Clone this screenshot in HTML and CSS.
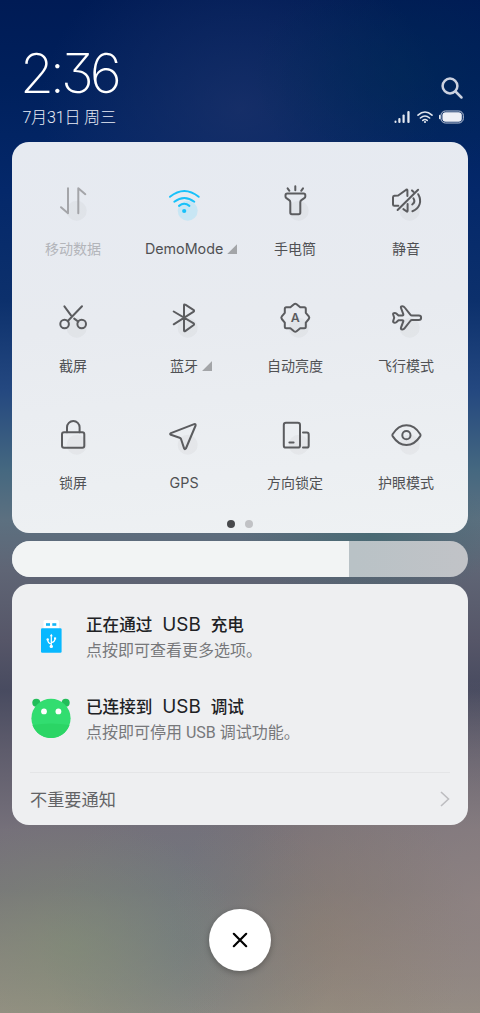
FILE: index.html
```html
<!DOCTYPE html>
<html lang="zh-CN">
<head>
<meta charset="utf-8">
<title>控制中心</title>
<link rel="stylesheet" href="styles.css">
</head>
<body>
<main class="shade">
  <header class="head">
    <div class="when">
      <div class="clock">2:36</div>
      <div class="date">7月31日 周三</div>
    </div>
    <div class="status">
      <svg class="search" width="24" height="24" viewBox="0 0 24 24"><circle cx="10" cy="10" r="7.4"/><path d="M15.5 15.5L21.5 21.5"/></svg>
      <div class="indicators">
        <svg width="17" height="14" viewBox="0 0 17 14" fill="#e4e8f0"><rect x="0.5" y="10.5" width="2" height="2.5" rx="1"/><rect x="4.3" y="8" width="2.2" height="5" rx="1"/><rect x="8.5" y="4.5" width="2.2" height="8.5" rx="1"/><rect x="13.3" y="1" width="2.3" height="12" rx="1"/></svg>
        <svg class="mini-wifi" width="18" height="14" viewBox="0 0 18 14"><path d="M2 5.2Q9 -1.2 16 5.2M4.4 8Q9 4 13.6 8M6.8 10.4Q9 8.7 11.2 10.4"/><circle cx="9" cy="12" r="1.1"/></svg>
        <svg width="26" height="14" viewBox="0 0 26 14"><rect x="1.9" y="1" width="22.4" height="12" rx="4.5" fill="none" stroke="#bdc7da"/><rect x="3.4" y="2.3" width="19.4" height="9.4" rx="3.2" fill="#eef0f6"/><rect x="0" y="4.8" width="1.6" height="4.4" rx=".8" fill="#e4e8f0"/></svg>
      </div>
    </div>
  </header>

  <section class="panel toggles">
    <div class="grid">
      <div class="tile off"><svg class="icon" viewBox="0 0 40 40"><circle class="spot" cx="23.7" cy="29.7" r="10"/><path d="M15 7.2V32.2L8 26.2M25.3 32.2V7.2L32.3 13.2"/></svg><span class="label">移动数据</span></div>
      <div class="tile on"><svg class="icon" viewBox="0 0 40 40"><circle class="spot" cx="23.7" cy="29.7" r="10"/><path d="M6 15.8Q20.3 4.2 34.7 15.8M10.3 20.7Q20.3 13.2 30.3 20.7M15 24.9Q20.2 20.7 25.4 24.9"/><circle class="dot" cx="20.2" cy="30" r="2.1"/></svg><span class="label latin">DemoMode<i class="corner"></i></span></div>
      <div class="tile"><svg class="icon" viewBox="0 0 40 40"><circle class="spot" cx="23.7" cy="29.7" r="10"/><path d="M12.6 7.4L14.4 9.8M20.3 5.3V9.2M28 7.4L26.2 9.8M12.2 12.6H28.6Q30.3 12.6 30.3 14.2V15.5Q30.3 16.6 29.3 17.2L26.4 19.1Q25.3 19.9 25.3 21.2V31.6Q25.3 33.3 23.6 33.3H17Q15.3 33.3 15.3 31.6V21.2Q15.3 19.9 14.2 19.1L11.4 17.2Q10.5 16.6 10.5 15.5V14.2Q10.5 12.6 12.2 12.6Z"/></svg><span class="label">手电筒</span></div>
      <div class="tile"><svg class="icon" viewBox="0 0 40 40"><circle class="spot" cx="23.7" cy="29.7" r="10"/><path d="M12.3 24.7H8.3Q7 24.7 7 23.4V16.2Q7 14.9 8.3 14.8L12.2 14.5L20.2 8.7Q21.4 8 21.4 9.5V15M11.6 29L32.1 8.8M21.6 23V29.8Q21.6 31.2 20.4 30.3L17.4 28.1M26 9.4L27.4 10.7M32.2 13.2C36.2 20 33.8 27.5 26.4 30.2M27.4 17.3C29 19.8 28.4 22 26.2 23.5"/></svg><span class="label">静音</span></div>

      <div class="tile"><svg class="icon" viewBox="0 0 40 40"><circle class="spot" cx="23.7" cy="29.7" r="10"/><circle cx="11.6" cy="26" r="4.3"/><circle cx="28.7" cy="26" r="4.3"/><path d="M29 8.3L14.6 23.2M11.4 8.3L18 17.3M21.2 20.6L25.4 23.7"/></svg><span class="label">截屏</span></div>
      <div class="tile"><svg class="icon" viewBox="0 0 40 40"><circle class="spot" cx="23.7" cy="29.7" r="10"/><path d="M9.7 13.5L29.3 25.2Q30.8 26.2 29.4 27.3L21.2 33.1Q20 33.8 20 32.2V7.5Q20 5.8 21.3 6.7L29.4 11.9Q30.8 12.9 29.3 13.9L9.7 26.3"/></svg><span class="label">蓝牙<i class="corner"></i></span></div>
      <div class="tile"><svg class="icon" viewBox="0 0 40 40"><circle class="spot" cx="23.7" cy="29.7" r="10"/><path d="M19 6.2Q20.3 5.2 21.6 6.2L25.2 9.2H29.3Q30.8 9.2 30.8 10.7V14.8L33.8 18.4Q34.8 19.7 33.8 21L30.8 24.6V28.7Q30.8 30.2 29.3 30.2H25.2L21.6 33.2Q20.3 34.2 19 33.2L15.4 30.2H11.3Q9.8 30.2 9.8 28.7V24.6L6.8 21Q5.8 19.7 6.8 18.4L9.8 14.8V10.7Q9.8 9.2 11.3 9.2H15.4Z"/><text class="auto" x="20.3" y="24.4" text-anchor="middle">A</text></svg><span class="label">自动亮度</span></div>
      <div class="tile"><svg class="icon" viewBox="0 0 40 40"><circle class="spot" cx="23.7" cy="29.7" r="10"/><path d="M32.8 17.5H26Q25 17.5 24.3 16.6L18.7 9.5Q17.8 8.2 16.3 8.2Q14.4 8.3 15 10L17.3 16.2Q17.6 17.4 16.4 17.4H12.5L10.3 15.4Q9.7 14.9 8.7 14.9Q7 14.9 7.1 16.3L8.2 19.8L7.1 23.3Q7 24.7 8.7 24.7Q9.7 24.7 10.3 24.2L12.5 22.2H16.4Q17.6 22.2 17.3 23.4L15 29.6Q14.4 31.3 16.3 31.4Q17.8 31.4 18.7 30.1L24.3 23Q25 22.1 26 22.1H32.8A2.3 2.3 0 0 0 32.8 17.5Z"/></svg><span class="label">飞行模式</span></div>

      <div class="tile"><svg class="icon" viewBox="0 0 40 40"><circle class="spot" cx="23.7" cy="29.7" r="10"/><rect x="9" y="17.2" width="22.3" height="15.5" rx="2"/><path d="M14 17.2V12.3A6.3 6.3 0 0 1 26.6 12.3V17.2"/></svg><span class="label">锁屏</span></div>
      <div class="tile"><svg class="icon" viewBox="0 0 40 40"><circle class="spot" cx="23.7" cy="29.7" r="10"/><path d="M30.2 9.1L6.9 18.1Q5.4 18.9 6.9 19.8L15.6 22.7Q16.7 23.1 17.1 24.2L20.1 33.4Q20.8 35 21.9 33.5L31.6 10.5Q31.9 8.6 30.2 9.1Z"/></svg><span class="label latin">GPS</span></div>
      <div class="tile"><svg class="icon" viewBox="0 0 40 40"><circle class="spot" cx="23.7" cy="29.7" r="10"/><rect x="8.8" y="7.8" width="16.2" height="24.8" rx="2.2"/><path d="M14.4 27.4H18.6M28 17.6H31.8Q33.7 17.6 33.7 19.5V30.7Q33.7 32.6 31.8 32.6H28"/></svg><span class="label">方向锁定</span></div>
      <div class="tile"><svg class="icon" viewBox="0 0 40 40"><circle class="spot" cx="23.7" cy="29.7" r="10"/><path d="M6.6 19.2C14.3 7.4 26.6 7.4 34.3 19.2Q34.8 20.2 34.3 21.1C26.6 33 14.3 33 6.6 21.1Q6.1 20.2 6.6 19.2Z"/><circle cx="20.4" cy="20.2" r="4.1"/></svg><span class="label">护眼模式</span></div>
    </div>
    <div class="pager"><i class="page current"></i><i class="page"></i></div>
  </section>

  <div class="brightness"><div class="level"></div></div>

  <section class="panel notices">
    <article class="notice">
      <svg class="badge" width="40" height="40" viewBox="0 0 40 40"><rect x="12.5" y="4" width="15.5" height="10" rx="1.5" fill="#fff"/><rect x="15" y="7.2" width="4" height="2.6" fill="#16b5f5"/><rect x="21.3" y="7.2" width="4" height="2.6" fill="#16b5f5"/><rect x="10" y="12.2" width="20.6" height="24.6" rx="1.2" fill="#08b8ff"/><g fill="none" stroke="#fff" stroke-width="1.2"><path d="M20.3 19V30M20.3 28Q16.7 27.4 16.7 23.6M20.3 26.6Q24 26 24 22.5"/></g><g fill="#fff"><circle cx="20.3" cy="30.4" r="1.7"/><circle cx="16.7" cy="23.5" r="1.2"/><rect x="23" y="21.4" width="2.1" height="2.1"/><path d="M18.8 20.2L20.3 17.8L21.8 20.2Z"/></g></svg>
      <div class="copy"><h2 class="title">正在通过 <b class="usb">USB</b> 充电</h2><p class="detail">点按即可查看更多选项。</p></div>
    </article>
    <article class="notice">
      <svg class="badge" width="40" height="40" viewBox="0 0 40 40"><circle cx="5.3" cy="4.8" r="4" fill="#22bd59"/><circle cx="34.7" cy="4.8" r="4" fill="#22bd59"/><circle cx="20" cy="20.3" r="19.6" fill="#32dd70"/><path d="M1.5 27Q20 23.8 38.5 27A19.6 19.6 0 0 1 1.5 27Z" fill="#2bd565"/><circle cx="13" cy="13.4" r="2.9" fill="#fff"/><circle cx="27.4" cy="13.4" r="2.9" fill="#fff"/></svg>
      <div class="copy"><h2 class="title">已连接到 <b class="usb">USB</b> 调试</h2><p class="detail">点按即可停用 USB 调试功能。</p></div>
    </article>
    <footer class="more"><span>不重要通知</span><svg width="10" height="16" viewBox="0 0 10 16"><path d="M1 1L8.5 8L1 15" fill="none" stroke="#bdbdc0" stroke-width="1.6"/></svg></footer>
  </section>

  <button class="close" aria-label="关闭"><svg width="16" height="16" viewBox="0 0 16 16"><path d="M1.8 1.8L14.2 14.2M14.2 1.8L1.8 14.2"/></svg></button>
</main>
</body>
</html>
```
FILE: styles.css
```css
* { box-sizing: border-box; }

body {
  margin: 0;
  font-family: Roboto, "Noto Sans CJK SC", sans-serif;
}

.shade {
  height: 1013px;
  padding: 0 12.4px;
  overflow: hidden;
  display: flex;
  flex-direction: column;
  background:
    radial-gradient(ellipse 170px 130px at 70px 945px, rgba(128, 144, 116, .55), transparent),
    radial-gradient(ellipse 150px 170px at 320px 930px, rgba(142, 126, 110, .5), transparent),
    radial-gradient(ellipse 150px 150px at 190px 940px, rgba(108, 120, 128, .7), transparent),
    radial-gradient(ellipse 240px 220px at 480px 900px, rgba(148, 134, 132, .75), transparent),
    radial-gradient(ellipse 130px 70px at 370px 535px, rgba(65, 105, 112, .7), transparent),
    radial-gradient(ellipse 150px 110px at 400px 75px, rgba(0, 44, 84, .5), transparent),
    radial-gradient(ellipse 200px 170px at 240px 110px, rgba(28, 50, 106, .75), transparent),
    linear-gradient(#001b55 0, #00205c 80px, #04286a 190px, #0c306c 300px, #244880 390px, #456880 470px, #5c7080 520px, #5f6575 570px, #565668 640px, #484b60 690px, #5e5c6c 750px, #75707a 830px, #77747a 890px, #8a8480 960px, #969084 1013px);
}

.head {
  height: 142px;
  padding: 0 3px 0 10px;
  display: flex;
  justify-content: space-between;
  color: #fff;
}

.when { padding-top: 44px; }

.clock {
  height: 62px;
  margin-left: -2.5px;
  font: 200 55px/58px Inter, Lato, sans-serif;
  font-feature-settings: "cv09" 1;
  letter-spacing: -4px;
}

.date {
  font-size: 16.1px;
  line-height: 24px;
  font-weight: 300;
  color: #e9edf6;
  letter-spacing: -.2px;
}

.status {
  padding-top: 76px;
  display: flex;
  flex-direction: column;
  align-items: flex-end;
  gap: 10px;
}

.search {
  margin-right: 1px;
  fill: none;
  stroke: #ccd2e0;
  stroke-width: 2.5;
  stroke-linecap: round;
}

.indicators { display: flex; gap: 5px; }
.mini-wifi { fill: none; stroke: #e0e5ee; stroke-width: 1.6; stroke-linecap: round; }
.mini-wifi circle { fill: #e0e5ee; stroke: none; }

.panel { border-radius: 17px; flex: none; }

.toggles {
  height: 391px;
  padding: 0 5px;
  background: linear-gradient(175deg, #e6eaf1, #e8ebf0 45%, #eef1f3);
}

.grid {
  padding: 39px 0 0 .2px;
  display: grid;
  grid-template-columns: repeat(4, 111px);
  grid-auto-rows: 117px;
}

.tile {
  display: flex;
  flex-direction: column;
  align-items: center;
  gap: 17px;
  color: #505154;
}

.icon {
  width: 40px;
  height: 40px;
  fill: none;
  stroke: #5b5c5f;
  stroke-width: 2;
  stroke-linecap: round;
  stroke-linejoin: round;
}

.spot { fill: rgba(90, 95, 105, .05); stroke: none; }
.auto { font: 600 12.4px Inter, sans-serif; fill: #5b5c5f; stroke: none; }

.label {
  position: relative;
  font-size: 14px;
  line-height: 22px;
  white-space: nowrap;
}

.latin { font-family: Inter, sans-serif; font-size: 14.3px; letter-spacing: 0; }

.corner {
  position: absolute;
  left: calc(100% + 4px);
  bottom: 6px;
  width: 10px;
  height: 10px;
  background: #a3a5a8;
  clip-path: polygon(100% 0, 100% 100%, 0 100%);
}

.off { color: #b3b5ba; }
.off .icon { stroke: #a4a5a9; }
.on .icon { stroke: #18c1fa; }
.on .spot { fill: #c8e6f4; }
.on .dot { fill: #18c1fa; stroke: none; }

.pager {
  padding-right: 1px;
  margin-top: -12.5px;
  display: flex;
  justify-content: center;
  gap: 10px;
}

.page { width: 8px; height: 8px; border-radius: 50%; background: #c1c2c5; }
.current { background: #48494c; }

.brightness {
  height: 36px;
  margin: 8px 0 7px;
  flex: none;
  border-radius: 18px;
  overflow: hidden;
  background: linear-gradient(90deg, #b9c2c6 75%, #c1c3c7);
}

.level {
  width: 336.6px;
  height: 100%;
  background: #f2f4f4;
}

.notices {
  height: 241px;
  padding: 28px 17.6px 0;
  background: #eeeff1;
}

.notice {
  height: 81.5px;
  display: flex;
  gap: 15px;
  padding-left: 1px;
}

.badge { margin-top: 4px; }
.copy { padding-top: 1px; }
.title { margin: 0; font-size: 16.6px; line-height: 25px; font-weight: 500; color: #202124; white-space: pre; word-spacing: 5.8px; }
.usb { font: 400 18.9px/20px Inter, sans-serif; }
.detail { margin: 0; font-size: 16px; line-height: 26px; color: #77787b; }

.more {
  margin-top: -3.5px;
  height: 54px;
  display: flex;
  align-items: center;
  justify-content: space-between;
  border-top: 1px solid #e4e5e7;
  font-size: 17.2px;
  color: #626366;
}

.more span { padding-bottom: 2px; }

.close {
  width: 62px;
  height: 62px;
  margin: 84px auto 0;
  padding: 0;
  display: grid;
  place-items: center;
  border: 0;
  border-radius: 50%;
  background: #fff;
  box-shadow: 0 2px 6px rgba(0, 0, 0, .28);
}

.close svg { fill: none; stroke: #000; stroke-width: 2.2; stroke-linecap: round; }
```
